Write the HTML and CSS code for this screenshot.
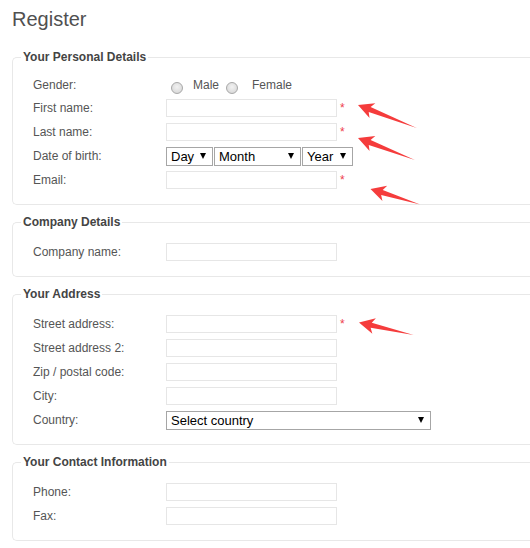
FILE: index.html
```html
<!DOCTYPE html>
<html>
<head>
<meta charset="utf-8">
<title>Register</title>
<link rel="stylesheet" href="styles.css">
</head>
<body>
<div class="page">
  <h1 class="title">Register</h1>

  <fieldset class="box">
    <legend class="box-title">Your Personal Details</legend>
    <div class="row row-gender">
      <span class="label">Gender:</span>
      <input class="radio radio-first" type="radio" name="gender" id="g-m">
      <label class="radio-label" for="g-m">Male</label>
      <input class="radio radio-second" type="radio" name="gender" id="g-f">
      <label class="radio-label" for="g-f">Female</label>
    </div>
    <div class="row">
      <span class="label">First name:</span>
      <input class="field" type="text">
      <span class="req">*</span>
    </div>
    <div class="row">
      <span class="label">Last name:</span>
      <input class="field" type="text">
      <span class="req">*</span>
    </div>
    <div class="row">
      <span class="label">Date of birth:</span>
      <div class="dob">
        <span class="sel"><select class="select select-day"><option>Day</option></select></span>
        <span class="sel"><select class="select select-month"><option>Month</option></select></span>
        <span class="sel"><select class="select select-year"><option>Year</option></select></span>
      </div>
    </div>
    <div class="row">
      <span class="label">Email:</span>
      <input class="field" type="text">
      <span class="req">*</span>
    </div>
  </fieldset>

  <fieldset class="box">
    <legend class="box-title">Company Details</legend>
    <div class="row">
      <span class="label">Company name:</span>
      <input class="field" type="text">
    </div>
  </fieldset>

  <fieldset class="box">
    <legend class="box-title">Your Address</legend>
    <div class="row">
      <span class="label">Street address:</span>
      <input class="field" type="text">
      <span class="req">*</span>
    </div>
    <div class="row">
      <span class="label">Street address 2:</span>
      <input class="field" type="text">
    </div>
    <div class="row">
      <span class="label">Zip / postal code:</span>
      <input class="field" type="text">
    </div>
    <div class="row">
      <span class="label">City:</span>
      <input class="field" type="text">
    </div>
    <div class="row">
      <span class="label">Country:</span>
      <span class="sel"><select class="select select-country"><option>Select country</option></select></span>
    </div>
  </fieldset>

  <fieldset class="box">
    <legend class="box-title">Your Contact Information</legend>
    <div class="row">
      <span class="label">Phone:</span>
      <input class="field" type="text">
    </div>
    <div class="row">
      <span class="label">Fax:</span>
      <input class="field" type="text">
    </div>
  </fieldset>
</div>

<svg class="annot" width="530" height="548" viewBox="0 0 530 548" aria-hidden="true">
  <g fill="#f53c3c">
    <polygon transform="translate(358 105) rotate(21.3)" points="0,0 15.5,-8 12.5,-2.6 63,0 12.5,2.6 15.5,8"/>
    <polygon transform="translate(358 138) rotate(21.1)" points="0,0 15.5,-8 12.5,-2.6 61,0 12.5,2.6 15.5,8"/>
    <polygon transform="translate(370.5 189) rotate(17.4)" points="0,0 15,-8 12,-2.6 52,0 12,2.6 15,8"/>
    <polygon transform="translate(359 322.5) rotate(12.8)" points="0,0 15.5,-8 12.5,-2.6 56,0 12.5,2.6 15.5,8"/>
  </g>
</svg>
</body>
</html>
```

FILE: styles.css
```css
html, body {
  margin: 0;
  padding: 0;
  overflow: hidden;
  background: #fff;
}

body {
  font-family: Arial, "Liberation Sans", sans-serif;
  font-size: 12px;
  color: #555;
  position: relative;
  width: 530px;
  height: 548px;
}

.page {
  padding-left: 12px;
}

.title {
  margin: 7px 0 18px;
  font-size: 20px;
  line-height: 24px;
  font-weight: normal;
  color: #505050;
}

.box {
  margin: 0 0 9px;
  padding: 10px 8px 12px;
  border: 1px solid #e8e8e8;
  border-right-width: 0;
  border-radius: 5px 0 0 5px;
  min-width: 0;
}

.box-title {
  padding: 0 2px;
  font-size: 12px;
  line-height: 16px;
  font-weight: bold;
  color: #444;
}

.row {
  display: flex;
  align-items: center;
  height: 24px;
  padding-left: 12px;
}

.row-gender {
  height: 21px;
}

.row-gender .label,
.row-gender .radio-label {
  margin-top: -1px;
}

.label {
  flex: none;
  width: 133px;
}

.field {
  box-sizing: border-box;
  width: 171px;
  height: 18px;
  margin: 0;
  padding: 0 3px;
  border: 1px solid #e6e6e6;
  font: 12px Arial, "Liberation Sans", sans-serif;
  background: #fff;
  outline: none;
}

.req {
  margin-left: 3px;
  color: #ee3d4d;
}

.radio {
  -webkit-appearance: none;
  appearance: none;
  box-sizing: border-box;
  width: 12px;
  height: 12px;
  margin: 5px 0 0;
  border: 1px solid #a8a8a8;
  border-radius: 50%;
  background: radial-gradient(circle at 50% 40%, #f2f2f2 0%, #dcdcdc 70%, #cfcfcf 100%);
}

.radio-first {
  margin-left: 5px;
  margin-right: 10px;
}

.radio-second {
  margin-left: 7px;
  margin-right: 14px;
}

.radio-label {
  color: #555;
}

.dob {
  display: flex;
  gap: 1px;
}

.sel {
  position: relative;
  display: block;
}

.sel::after {
  content: "";
  position: absolute;
  right: 7px;
  top: 6px;
  border-left: 3px solid transparent;
  border-right: 3px solid transparent;
  border-top: 6px solid #000;
  pointer-events: none;
}

.select {
  -webkit-appearance: none;
  appearance: none;
  box-sizing: border-box;
  display: block;
  height: 19px;
  margin: 0;
  padding: 0 0 0 4px;
  border: 1px solid #a6a6a6;
  border-radius: 0;
  background: #fff;
  color: #000;
  font: 13px Arial, "Liberation Sans", sans-serif;
  line-height: 17px;
}

.select-day { width: 47px; }
.select-month { width: 87px; }
.select-year { width: 51px; }
.select-country { width: 265px; }

.annot {
  position: absolute;
  left: 0;
  top: 0;
  pointer-events: none;
}
```
